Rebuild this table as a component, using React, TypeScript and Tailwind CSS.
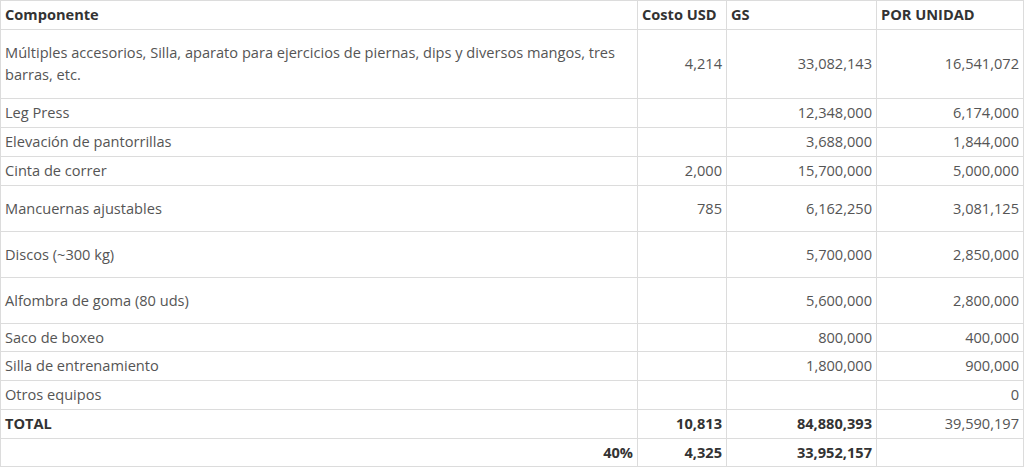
import React from "react";

type Row = {
  name: string;
  usd?: string;
  gs: string;
  unit: string;
  h: string;
};

const rows: Row[] = [
  {
    name: "Múltiples accesorios, Silla, aparato para ejercicios de piernas, dips y diversos mangos, tres barras, etc.",
    usd: "4,214",
    gs: "33,082,143",
    unit: "16,541,072",
    h: "h-[69px]",
  },
  { name: "Leg Press", gs: "12,348,000", unit: "6,174,000", h: "h-[29px]" },
  { name: "Elevación de pantorrillas", gs: "3,688,000", unit: "1,844,000", h: "h-[29px]" },
  { name: "Cinta de correr", usd: "2,000", gs: "15,700,000", unit: "5,000,000", h: "h-[29px]" },
  { name: "Mancuernas ajustables", usd: "785", gs: "6,162,250", unit: "3,081,125", h: "h-[46px]" },
  { name: "Discos (~300 kg)", gs: "5,700,000", unit: "2,850,000", h: "h-[46px]" },
  { name: "Alfombra de goma (80 uds)", gs: "5,600,000", unit: "2,800,000", h: "h-[46px]" },
  { name: "Saco de boxeo", gs: "800,000", unit: "400,000", h: "h-[28px]" },
  { name: "Silla de entrenamiento", gs: "1,800,000", unit: "900,000", h: "h-[29px]" },
  { name: "Otros equipos", gs: "", unit: "0", h: "h-[29px]" },
];

const cell = "border border-[#dcdcdc] px-[4px] pt-0 pb-[2px] align-middle";

export default function App() {
  return (
    <div className="w-[1024px] h-[467px] bg-white font-['Open_Sans',sans-serif] text-[14.6px] leading-[22px] text-[#555]">
      <table className="w-[1023px] border-collapse table-fixed">
        <colgroup>
          <col className="w-[637px]" />
          <col className="w-[89px]" />
          <col className="w-[150px]" />
          <col className="w-[147px]" />
        </colgroup>
        <thead>
          <tr className="h-[29px] font-bold text-[#333]">
            <th className={`${cell} text-left`}>Componente</th>
            <th className={`${cell} text-left`}>Costo USD</th>
            <th className={`${cell} text-left`}>GS</th>
            <th className={`${cell} text-left`}>POR UNIDAD</th>
          </tr>
        </thead>
        <tbody>
          {rows.map((r) => (
            <tr key={r.name} className={r.h}>
              <td className={`${cell} text-left`}>{r.name}</td>
              <td className={`${cell} text-right`}>{r.usd ?? ""}</td>
              <td className={`${cell} text-right`}>{r.gs}</td>
              <td className={`${cell} text-right`}>{r.unit}</td>
            </tr>
          ))}
          <tr className="h-[29px]">
            <td className={`${cell} text-left font-bold text-[#333]`}>TOTAL</td>
            <td className={`${cell} text-right font-bold text-[#333]`}>10,813</td>
            <td className={`${cell} text-right font-bold text-[#333]`}>84,880,393</td>
            <td className={`${cell} text-right`}>39,590,197</td>
          </tr>
          <tr className="h-[28px]">
            <td className={`${cell} text-right font-bold text-[#333]`}>40%</td>
            <td className={`${cell} text-right font-bold text-[#333]`}>4,325</td>
            <td className={`${cell} text-right font-bold text-[#333]`}>33,952,157</td>
            <td className={cell}></td>
          </tr>
        </tbody>
      </table>
    </div>
  );
}
